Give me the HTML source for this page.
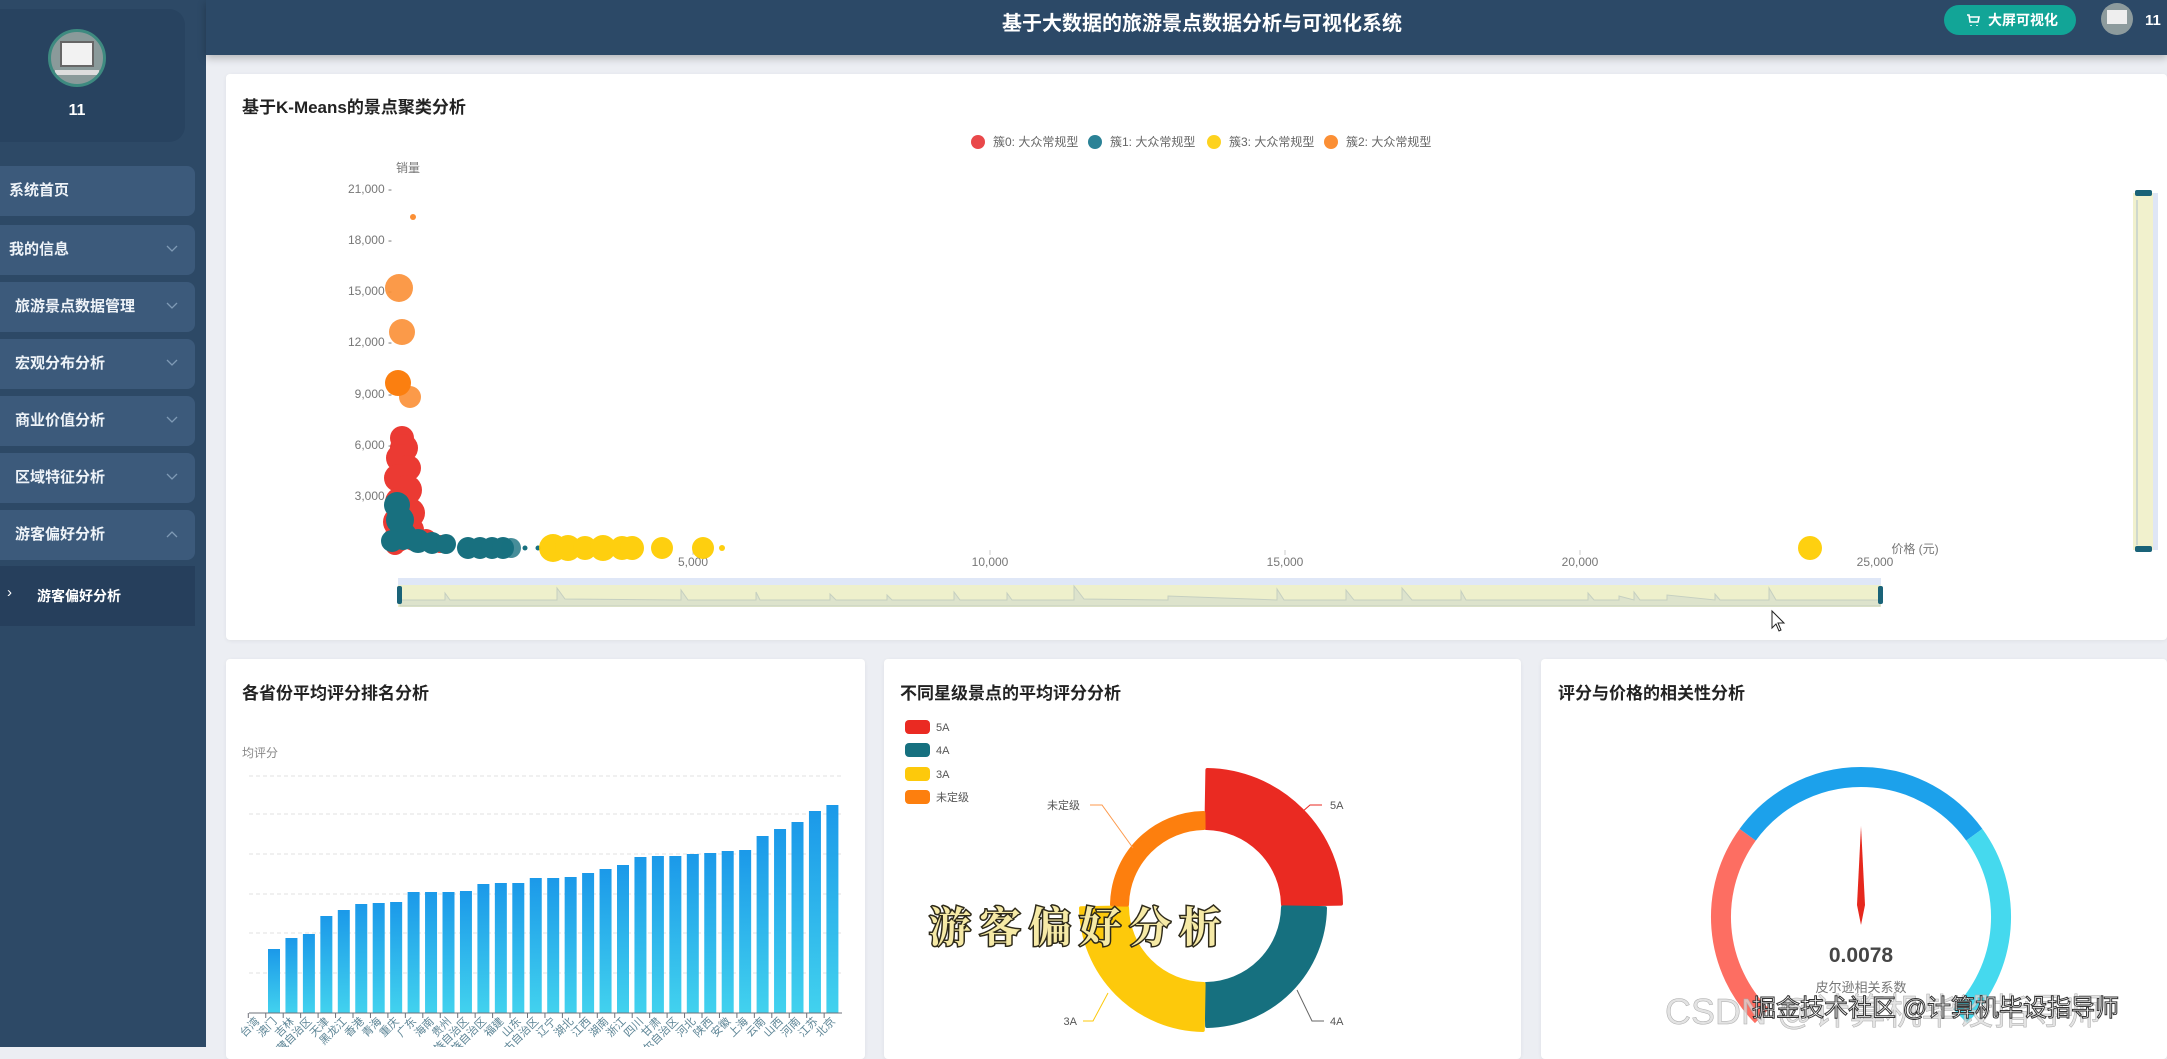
<!DOCTYPE html>
<html><head><meta charset="utf-8">
<style>
*{margin:0;padding:0;box-sizing:border-box}
body{width:2167px;height:1047px;overflow:hidden;background:#eceef3;font-family:"Liberation Sans","Noto Sans CJK SC",sans-serif;position:relative}
.abs{position:absolute}
#side{left:0;top:0;width:206px;height:1047px;background:#2d4966}
#hdr{left:206px;top:0;width:1961px;height:55px;background:#2c4967;box-shadow:0 3px 8px rgba(0,0,0,.25)}
.prof{left:0;top:9px;width:185px;height:133px;background:#284360;border-radius:0 16px 16px 0}
.mi{left:0;width:195px;height:50px;background:#3c5a7b;border-radius:0 8px 8px 0;color:#eef3f8;font-weight:bold;font-size:15px;line-height:50px}
.mi svg{position:absolute;left:166px;top:20px}
.card{background:#fff;border-radius:4px;box-shadow:0 1px 4px rgba(0,0,0,.06)}
.tt{font-size:17px;font-weight:bold;color:#222;position:absolute}
</style></head><body>
<div id="side" class="abs">
  <div class="prof abs"></div>
  <div class="abs" style="left:48px;top:29px;width:58px;height:58px;border-radius:50%;background:#8a9a9a;border:3px solid #3e8a80;overflow:hidden">
    <div style="position:absolute;left:9px;top:9px;width:34px;height:26px;background:#f2f2f2;border:2px solid #666"></div>
    <div style="position:absolute;left:4px;top:38px;width:44px;height:5px;background:#ddd"></div>
  </div>
  <div class="abs" style="left:0;width:154px;top:102px;text-align:center;color:#fff;font-weight:bold;font-size:16px">11</div>
  <div class="mi abs" style="top:166px;padding-left:9px">系统首页</div>
  <div class="mi abs" style="top:225px;padding-left:9px">我的信息<svg width="12" height="8"><polyline points="1,1 6,6 11,1" fill="none" stroke="#7f9ab5" stroke-width="1.3"/></svg></div>
  <div class="mi abs" style="top:282px;padding-left:15px">旅游景点数据管理<svg width="12" height="8"><polyline points="1,1 6,6 11,1" fill="none" stroke="#7f9ab5" stroke-width="1.3"/></svg></div>
  <div class="mi abs" style="top:339px;padding-left:15px">宏观分布分析<svg width="12" height="8"><polyline points="1,1 6,6 11,1" fill="none" stroke="#7f9ab5" stroke-width="1.3"/></svg></div>
  <div class="mi abs" style="top:396px;padding-left:15px">商业价值分析<svg width="12" height="8"><polyline points="1,1 6,6 11,1" fill="none" stroke="#7f9ab5" stroke-width="1.3"/></svg></div>
  <div class="mi abs" style="top:453px;padding-left:15px">区域特征分析<svg width="12" height="8"><polyline points="1,1 6,6 11,1" fill="none" stroke="#7f9ab5" stroke-width="1.3"/></svg></div>
  <div class="mi abs" style="top:510px;padding-left:15px">游客偏好分析<svg width="12" height="8"><polyline points="1,7 6,2 11,7" fill="none" stroke="#7f9ab5" stroke-width="1.3"/></svg></div>
  <div class="abs" style="left:0;top:566px;width:195px;height:60px;background:#263f5c"></div>
  <div class="abs" style="left:7px;top:584px;color:#fff;font-size:15px">›</div>
  <div class="abs" style="left:37px;top:586px;color:#fff;font-weight:bold;font-size:14px">游客偏好分析</div>
</div>
<div id="hdr" class="abs">
  <div class="abs" style="left:0;width:1992px;top:7px;text-align:center;color:#fff;font-weight:bold;font-size:20px">基于大数据的旅游景点数据分析与可视化系统</div>
  <div class="abs" style="left:1738px;top:5px;width:132px;height:30px;border-radius:15px;background:#12a597;color:#fff;font-weight:bold;font-size:14px;line-height:30px;padding-left:44px">
    <svg class="abs" style="left:22px;top:9px" width="14" height="13"><path d="M1,1 H3 L4,8 H12 L13,3 H4 M5,11 v1 M11,11 v1" fill="none" stroke="#fff" stroke-width="1.6"/></svg>大屏可视化</div>
  <div class="abs" style="left:1895px;top:3px;width:32px;height:32px;border-radius:50%;background:#8d9b9d;overflow:hidden"><div style="position:absolute;left:6px;top:7px;width:20px;height:14px;background:#eee"></div></div>
  <div class="abs" style="left:1939px;top:12px;color:#fff;font-weight:bold;font-size:15px">11</div>
</div>

<div class="abs card" style="left:226px;top:74px;width:1941px;height:566px"></div>
<div class="tt" style="left:242px;top:93px">基于K-Means的景点聚类分析</div>
<div class="abs card" style="left:226px;top:659px;width:639px;height:400px"></div>
<div class="abs card" style="left:884px;top:659px;width:637px;height:400px"></div>
<div class="abs card" style="left:1541px;top:659px;width:626px;height:400px"></div>
<div class="tt" style="left:242px;top:679px">各省份平均评分排名分析</div>
<div class="tt" style="left:900px;top:679px">不同星级景点的平均评分分析</div>
<div class="tt" style="left:1558px;top:679px">评分与价格的相关性分析</div>

<svg class="abs" style="left:0;top:0" width="2167" height="1047" font-family="Liberation Sans,Noto Sans CJK SC,sans-serif">
<defs><linearGradient id="bg" x1="0" y1="0" x2="0" y2="1"><stop offset="0" stop-color="#1b99e9"/><stop offset="1" stop-color="#42d2ee"/></linearGradient></defs>
<g font-size="12" fill="#666">
<circle cx="978" cy="142" r="7" fill="#e9484a"/><text x="993" y="146">簇0: 大众常规型</text>
<circle cx="1095" cy="142" r="7" fill="#2b8296"/><text x="1110" y="146">簇1: 大众常规型</text>
<circle cx="1214" cy="142" r="7" fill="#fdd21f"/><text x="1229" y="146">簇3: 大众常规型</text>
<circle cx="1331" cy="142" r="7" fill="#fb8f35"/><text x="1346" y="146">簇2: 大众常规型</text>
</g>
<g font-size="12" fill="#777" text-anchor="end">
<text x="408" y="172" text-anchor="middle">销量</text>
<text x="392" y="193">21,000 -</text><text x="392" y="244">18,000 -</text><text x="392" y="295">15,000 -</text><text x="392" y="346">12,000 -</text><text x="392" y="398">9,000 -</text><text x="392" y="449">6,000 -</text><text x="392" y="500">3,000 -</text>
</g>
<g font-size="12" fill="#777" text-anchor="middle">
<text x="693" y="566">5,000</text><text x="990" y="566">10,000</text><text x="1285" y="566">15,000</text><text x="1580" y="566">20,000</text><text x="1875" y="566">25,000</text>
<text x="1915" y="553">价格 (元)</text>
</g>
<g stroke="#ccc"><line x1="693" y1="550" x2="693" y2="555"/><line x1="990" y1="550" x2="990" y2="555"/><line x1="1285" y1="550" x2="1285" y2="555"/><line x1="1580" y1="550" x2="1580" y2="555"/></g>
<g>
<circle cx="413" cy="217" r="3" fill="#fb8f35"/>
<circle cx="399" cy="288" r="14" fill="#fb8f35" opacity=".9"/>
<circle cx="402" cy="332" r="13" fill="#fb8f35" opacity=".9"/>
<circle cx="410" cy="397" r="11" fill="#fb8f35" opacity=".9"/>
<circle cx="398" cy="383" r="13" fill="#fb7f10"/>
<g fill="#ea2a22" opacity=".92">
<circle cx="402" cy="438" r="12"/><circle cx="404" cy="448" r="14"/><circle cx="400" cy="458" r="14"/><circle cx="408" cy="468" r="13"/><circle cx="398" cy="478" r="14"/><circle cx="407" cy="490" r="15"/><circle cx="400" cy="502" r="15"/><circle cx="410" cy="513" r="15"/><circle cx="398" cy="522" r="15"/><circle cx="410" cy="530" r="14"/><circle cx="398" cy="538" r="14"/><circle cx="414" cy="538" r="13"/><circle cx="426" cy="540" r="11"/><circle cx="440" cy="544" r="9"/><circle cx="395" cy="545" r="10"/>
</g>
<g fill="#18707f">
<circle cx="397" cy="505" r="13"/><circle cx="400" cy="520" r="14"/><circle cx="403" cy="536" r="14"/><circle cx="418" cy="541" r="12"/><circle cx="432" cy="543" r="11"/><circle cx="446" cy="544" r="10"/><circle cx="392" cy="541" r="11"/>
<circle cx="468" cy="548" r="11"/><circle cx="480" cy="548" r="11"/><circle cx="492" cy="548" r="11"/><circle cx="503" cy="548" r="11"/><circle cx="511" cy="548" r="10" opacity=".8"/>
<circle cx="525" cy="548" r="2.5"/><circle cx="538" cy="548" r="2.5"/>
</g>
<g fill="#fecd03" opacity=".95">
<circle cx="553" cy="548" r="14"/><circle cx="568" cy="548" r="13"/><circle cx="585" cy="548" r="12"/><circle cx="603" cy="548" r="13"/><circle cx="622" cy="548" r="12"/><circle cx="632" cy="548" r="12"/><circle cx="662" cy="548" r="11"/><circle cx="703" cy="548" r="11"/><circle cx="722" cy="548" r="3"/><circle cx="1810" cy="548" r="12"/>
</g>
</g>
<rect x="398" y="578" width="1483" height="7" fill="#dfe7f7"/>
<rect x="398" y="585" width="1483" height="22" fill="#eef0cc"/>
<path d="M400,600 L445,600 445,593 450,600 557,600 557,588 565,599 681,600 681,590 688,600 756,600 756,592 760,600 830,600 830,594 836,600 887,600 887,595 892,600 954,600 954,592 960,600 1007,600 1007,593 1012,600 1074,600 1074,586 1084,599 1168,600 1168,596 1277,600 1277,589 1284,600 1346,600 1346,590 1354,600 1402,600 1402,588 1412,600 1461,600 1461,591 1466,600 1588,600 1588,593 1594,600 1619,600 1619,596 1634,600 1634,592 1640,600 1667,600 1667,595 1715,600 1715,594 1720,600 1769,600 1769,588 1776,600 1880,600 L1880,606 L400,606 Z" fill="#dde3cc" stroke="#c5cfc0" stroke-width="1"/>
<rect x="397" y="586" width="5" height="18" rx="2" fill="#1a6378"/><rect x="1878" y="586" width="5" height="18" rx="2" fill="#1a6378"/>
<path d="M1772,611 L1772,628 L1776,624 L1779,631 L1781,630 L1778,623 L1784,623 Z" fill="#fff" stroke="#222" stroke-width="1"/>
<rect x="2152" y="193" width="6" height="357" fill="#dfe6f5"/>
<rect x="2133" y="193" width="20" height="357" fill="#f1f1cd"/>
<path d="M2137,200 L2137,545" stroke="#cfd8cc" stroke-width="2"/>
<rect x="2135" y="190" width="17" height="6" rx="2" fill="#1a6378"/><rect x="2135" y="546" width="17" height="6" rx="2" fill="#1a6378"/>

<text x="242" y="757" font-size="12" fill="#888">均评分</text>
<g stroke="#e0e0e0" stroke-dasharray="4,3"><line x1="249" y1="776" x2="842" y2="776"/><line x1="249" y1="814" x2="842" y2="814"/><line x1="249" y1="854" x2="842" y2="854"/><line x1="249" y1="894" x2="842" y2="894"/><line x1="249" y1="933" x2="842" y2="933"/><line x1="249" y1="973" x2="842" y2="973"/></g>
<g fill="url(#bg)" id="bars"></g>
<line x1="249" y1="1013" x2="842" y2="1013" stroke="#6e7079"/>
<g id="xl" font-size="11" fill="#5d8596"></g>

<g font-size="11" fill="#555">
<rect x="905" y="720" width="25" height="14" rx="4" fill="#ea2a22"/><text x="936" y="731">5A</text>
<rect x="905" y="743" width="25" height="14" rx="4" fill="#16707f"/><text x="936" y="754">4A</text>
<rect x="905" y="767" width="25" height="14" rx="4" fill="#fdc90b"/><text x="936" y="778">3A</text>
<rect x="905" y="790" width="25" height="14" rx="4" fill="#fd7f0e"/><text x="936" y="801">未定级</text>
</g>
<g stroke-linejoin="round" stroke-width="4">
<path d="M1207.4,770 A136,136 0 0 1 1341,903.6 L1283,904.6 A78,78 0 0 0 1206.4,828 Z" fill="#ea2a22" stroke="#ea2a22"/>
<path d="M1325,908.1 A120,120 0 0 1 1207.1,1026 L1206.4,984 A78,78 0 0 0 1283,907.4 Z" fill="#16707f" stroke="#16707f"/>
<path d="M1202.8,1030 A124,124 0 0 1 1081,908.2 L1127,907.4 A78,78 0 0 0 1203.6,984 Z" fill="#fdc90b" stroke="#fdc90b"/>
<path d="M1112,904.4 A93,93 0 0 1 1203.4,813 L1203.6,828 A78,78 0 0 0 1127,904.6 Z" fill="#fd7f0e" stroke="#fd7f0e"/>
</g>
<g fill="none" stroke-width="1">
<polyline points="1302,812 1310,805 1322,805" stroke="#ea2a22"/>
<polyline points="1090,805 1102,805 1133,848" stroke="#fd9a4c"/>
<polyline points="1297,990 1312,1021 1324,1021" stroke="#666"/>
<polyline points="1083,1021 1093,1021 1108,993" stroke="#fdc90b"/>
</g>
<g font-size="11" fill="#555"><text x="1330" y="809">5A</text><text x="1330" y="1025">4A</text><text x="1080" y="809" text-anchor="end">未定级</text><text x="1077" y="1025" text-anchor="end">3A</text></g>

<g fill="none" stroke-width="20">
<path d="M1762,1016 A140,140 0 0 1 1747.7,834.7" stroke="#fd6e62"/>
<path d="M1747.7,834.7 A140,140 0 0 1 1974.3,834.7" stroke="#1ca1eb"/>
<path d="M1974.3,834.7 A140,140 0 0 1 1960,1016" stroke="#45d9ee"/>
</g>
<polygon points="1861,826 1865,905 1861,925 1857,905" fill="#e6281d"/>
<text x="1861" y="962" font-size="21" font-weight="bold" fill="#464646" text-anchor="middle">0.0078</text>
<text x="1861" y="992" font-size="13" fill="#777" text-anchor="middle">皮尔逊相关系数</text>

<text x="1665" y="1024" font-size="36" fill="#dadada" fill-opacity=".75" stroke="#aaa" stroke-width=".5">CSDN @计算机毕设指导师</text>
<text x="1752" y="1016" font-size="24" fill="#fff" stroke="#333" stroke-width="1">掘金技术社区 @计算机毕设指导师</text>
<text x="929" y="942" font-size="42" font-weight="bold" font-family="Noto Serif CJK SC,serif" letter-spacing="8" fill="#f6eaa6" stroke="#2e2a1a" stroke-width="3" paint-order="stroke">游客偏好分析</text>
</svg>
<script>
var tops=[949,938,934,916,910,904,903,902,892,892,892,891,884,883,883,878,878,877,873,869,865,857,856,856,854,853,851,850,836,829,822,811,805];
var names=["台湾","澳门","吉林","西藏自治区","天津","黑龙江","香港","青海","重庆","广东","海南","贵州","广西壮族自治区","宁夏回族自治区","福建","山东","内蒙古自治区","辽宁","湖北","江西","湖南","浙江","四川","甘肃","新疆维吾尔自治区","河北","陕西","安徽","上海","云南","山西","河南","江苏","北京"];
var ns="http://www.w3.org/2000/svg",b=document.getElementById("bars"),xl=document.getElementById("xl");
var pitch=17.45;
tops.forEach(function(t,i){var r=document.createElementNS(ns,"rect");var x=268+i*pitch;r.setAttribute("x",x);r.setAttribute("y",t);r.setAttribute("width",12);r.setAttribute("height",1013-t);b.appendChild(r);});
names.forEach(function(n,i){var cx=257+i*pitch;var tx=document.createElementNS(ns,"text");tx.setAttribute("x",cx+3);tx.setAttribute("y",1022);tx.setAttribute("text-anchor","end");tx.setAttribute("transform","rotate(-45 "+(cx+3)+" 1022)");tx.textContent=n;xl.appendChild(tx);
var l=document.createElementNS(ns,"line");l.setAttribute("x1",cx-8.7);l.setAttribute("x2",cx-8.7);l.setAttribute("y1",1013);l.setAttribute("y2",1018);l.setAttribute("stroke","#6e7079");xl.appendChild(l);});
</script>
</body></html>
